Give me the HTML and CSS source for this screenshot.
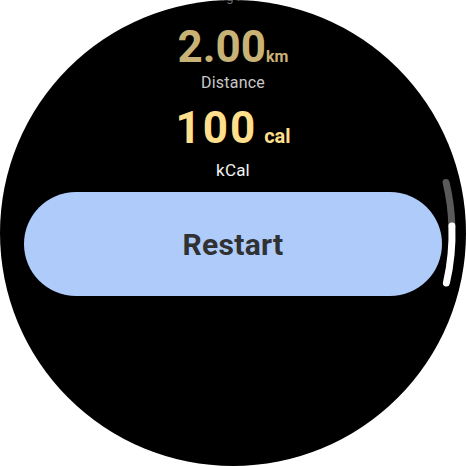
FILE: index.html
```html
<!DOCTYPE html>
<html>
<head>
<meta charset="utf-8">
<link rel="stylesheet" href="styles.css">
</head>
<body>
<div class="watch">
  <div class="list">
    <div class="prev-label">Avg HR</div>
    <div class="metric">
      <div class="value gold">2.00<span class="unit">km</span></div>
      <div class="label grey">Distance</div>
    </div>
    <div class="metric second">
      <div class="value yellow wide">100<span class="unit spaced">cal</span></div>
      <div class="label white">kCal</div>
    </div>
    <button class="chip">Restart</button>
  </div>
  <svg class="scroll" width="466" height="466" viewBox="0 0 466 466">
    <path d="M 446.1 182.5 A 219 219 0 0 1 451.9 226" fill="none" stroke="#5a5a5a" stroke-width="7" stroke-linecap="round"/>
    <path d="M 451.9 226 A 219 219 0 0 1 446.4 283" fill="none" stroke="#ffffff" stroke-width="7" stroke-linecap="round"/>
  </svg>
</div>
</body>
</html>
```
FILE: styles.css
```css
* { box-sizing: border-box; }
html, body {
  margin: 0;
  padding: 0;
  background: #ffffff;
}
.watch {
  position: relative;
  width: 466px;
  height: 466px;
  border-radius: 50%;
  background: #000;
  overflow: hidden;
  font-family: Roboto, "Noto Sans", sans-serif;
}
.list {
  display: flex;
  flex-direction: column;
  align-items: center;
  margin-top: -11px;
}
.prev-label {
  font-size: 13px;
  line-height: 16px;
  color: #6a6a6a;
  height: 16px;
  margin-bottom: 20px;
}
.metric {
  display: flex;
  flex-direction: column;
  align-items: center;
}
.value {
  font-size: 44px;
  line-height: 44px;
  font-weight: 700;
  white-space: nowrap;
}
.value.wide {
  letter-spacing: 2px;
}
.unit {
  font-size: 16px;
  line-height: 1;
  font-weight: 700;
  letter-spacing: 0;
}
.unit.spaced {
  font-size: 20px;
  margin-left: 7px;
}
.gold { color: #c9b275; }
.yellow { color: #ffdf8b; }
.label {
  font-size: 16px;
  line-height: 20px;
  letter-spacing: 0.2px;
  margin-top: 4px;
}
.grey { color: #c8c8c8; }
.white { color: #f2f2f2; font-size: 17px; margin-top: 10px; }
.second { margin-top: 13px; }
.chip {
  margin-top: 12px;
  width: 418px;
  height: 104px;
  border: none;
  border-radius: 52px;
  background: #aecbfa;
  color: #303133;
  font-family: Roboto, "Noto Sans", sans-serif;
  font-size: 30px;
  font-weight: 700;
  letter-spacing: 0.3px;
  padding: 0;
}
.scroll {
  position: absolute;
  left: 0;
  top: 0;
}
```
